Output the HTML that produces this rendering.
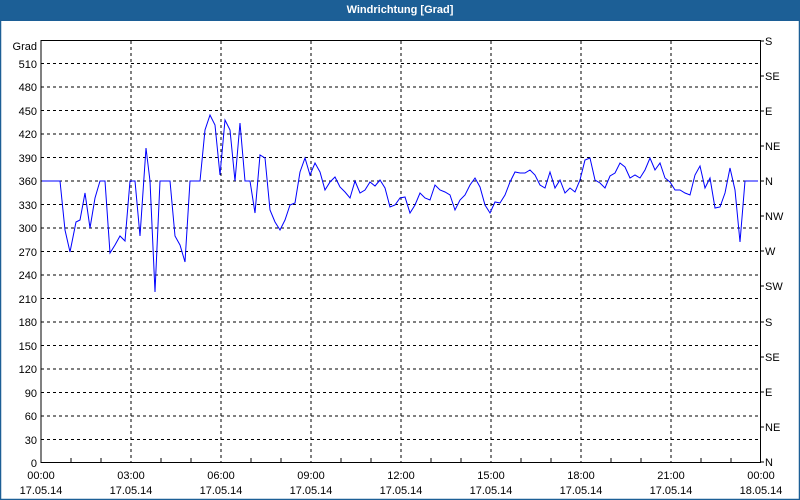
<!DOCTYPE html>
<html><head><style>
body{margin:0;width:800px;height:500px;background:#fff;overflow:hidden;font-family:"Liberation Sans","DejaVu Sans",sans-serif}
.t{position:absolute;left:0;top:0;width:800px;height:21px;background:#1c5f96;color:#fff;font-weight:bold;font-size:11px;text-align:center;line-height:21px}
</style></head><body>
<div class="t">Windrichtung [Grad]</div>
<svg width="800" height="500" style="position:absolute;left:0;top:0" font-family="Liberation Sans, sans-serif" font-size="11">
<rect x="0.5" y="20" width="799" height="479.5" fill="none" stroke="#1c5f96" stroke-width="1.5"/>
<g stroke="#000" stroke-dasharray="3,3" stroke-width="1">
<line x1="41" x2="760" y1="63.5" y2="63.5"/><line x1="41" x2="760" y1="87" y2="87"/><line x1="41" x2="760" y1="110.5" y2="110.5"/><line x1="41" x2="760" y1="134" y2="134"/><line x1="41" x2="760" y1="157.5" y2="157.5"/><line x1="41" x2="760" y1="181" y2="181"/><line x1="41" x2="760" y1="204.5" y2="204.5"/><line x1="41" x2="760" y1="228" y2="228"/><line x1="41" x2="760" y1="251.5" y2="251.5"/><line x1="41" x2="760" y1="275" y2="275"/><line x1="41" x2="760" y1="298.5" y2="298.5"/><line x1="41" x2="760" y1="322" y2="322"/><line x1="41" x2="760" y1="345.5" y2="345.5"/><line x1="41" x2="760" y1="369" y2="369"/><line x1="41" x2="760" y1="392.5" y2="392.5"/><line x1="41" x2="760" y1="416" y2="416"/><line x1="41" x2="760" y1="439.5" y2="439.5"/>
<line x1="131" x2="131" y1="41" y2="462"/><line x1="221" x2="221" y1="41" y2="462"/><line x1="311" x2="311" y1="41" y2="462"/><line x1="401" x2="401" y1="41" y2="462"/><line x1="491" x2="491" y1="41" y2="462"/><line x1="581" x2="581" y1="41" y2="462"/><line x1="671" x2="671" y1="41" y2="462"/>
</g>
<rect x="41" y="40.5" width="719.5" height="422" fill="none" stroke="#000"/>
<g stroke="#000">
<path d="M71 462v-4M101 462v-4M161 462v-4M191 462v-4M251 462v-4M281 462v-4M341 462v-4M371 462v-4M431 462v-4M461 462v-4M521 462v-4M551 462v-4M611 462v-4M641 462v-4M701 462v-4M731 462v-4"/>
<path d="M760 41h4M760 76h4M760 111h4M760 146h4M760 181h4M760 216h4M760 251h4M760 286h4M760 322h4M760 357h4M760 392h4M760 427h4M760 462h4"/>
</g>
<g text-anchor="end" fill="#000">
<text x="37" y="50">Grad</text><text x="37" y="68">510</text><text x="37" y="91">480</text><text x="37" y="115">450</text><text x="37" y="138">420</text><text x="37" y="162">390</text><text x="37" y="185">360</text><text x="37" y="209">330</text><text x="37" y="232">300</text><text x="37" y="256">270</text><text x="37" y="279">240</text><text x="37" y="303">210</text><text x="37" y="326">180</text><text x="37" y="350">150</text><text x="37" y="373">120</text><text x="37" y="397">90</text><text x="37" y="420">60</text><text x="37" y="444">30</text><text x="37" y="467">0</text>
</g>
<g fill="#000">
<text x="765" y="45">S</text><text x="765" y="80">SE</text><text x="765" y="115">E</text><text x="765" y="150">NE</text><text x="765" y="185">N</text><text x="765" y="220">NW</text><text x="765" y="255">W</text><text x="765" y="290">SW</text><text x="765" y="326">S</text><text x="765" y="361">SE</text><text x="765" y="396">E</text><text x="765" y="431">NE</text><text x="765" y="466">N</text>
</g>
<g text-anchor="middle" fill="#000">
<text x="41" y="479">00:00</text><text x="41" y="494">17.05.14</text>
<text x="131" y="479">03:00</text><text x="131" y="494">17.05.14</text>
<text x="221" y="479">06:00</text><text x="221" y="494">17.05.14</text>
<text x="311" y="479">09:00</text><text x="311" y="494">17.05.14</text>
<text x="401" y="479">12:00</text><text x="401" y="494">17.05.14</text>
<text x="491" y="479">15:00</text><text x="491" y="494">17.05.14</text>
<text x="581" y="479">18:00</text><text x="581" y="494">17.05.14</text>
<text x="671" y="479">21:00</text><text x="671" y="494">17.05.14</text>
<text x="761" y="479">00:00</text><text x="761" y="494">18.05.14</text>
</g>
<polyline fill="none" stroke="#0000ff" stroke-width="1" points="42,181 60,181 65,230 70,252 76,222 80,220 85,193 90,228 95,198 100,181 105,181 110,253 115,245 120,236 125,241 130,181 135,181 140,236 146,148 150,181 155,292 160,181 170,181 175,236 180,245 185,262 190,181 200,181 205,130 210,115 215,125 220,175 225,120 230,130 235,181 240,123 245,181 250,181 255,213 260,155 265,158 270,210 275,222 280,230 285,220 290,205 295,203 300,172 305,158 310,175 315,163 320,172 325,190 330,182 335,177 340,187 345,192 350,198 355,181 360,193 365,190 370,182 375,186 380,180 385,188 390,207 395,205 400,198 405,197 410,213 415,205 420,193 425,198 430,200 435,185 440,190 445,192 450,195 455,210 460,200 465,195 470,185 475,178 480,187 485,205 490,213 495,202 500,203 505,195 510,182 515,172 520,173 525,173 530,170 535,175 540,185 545,188 550,172 555,188 560,180 565,193 570,188 575,192 580,180 585,160 590,158 595,180 600,183 605,188 610,176 615,173 620,163 625,167 630,178 635,175 640,178 645,170 650,158 655,170 660,163 665,178 670,182 675,190 680,190 685,193 690,195 695,175 700,166 705,188 710,178 715,208 720,207 725,193 730,168 735,190 740,242 745,181 758,181"/>
</svg>
</body></html>
